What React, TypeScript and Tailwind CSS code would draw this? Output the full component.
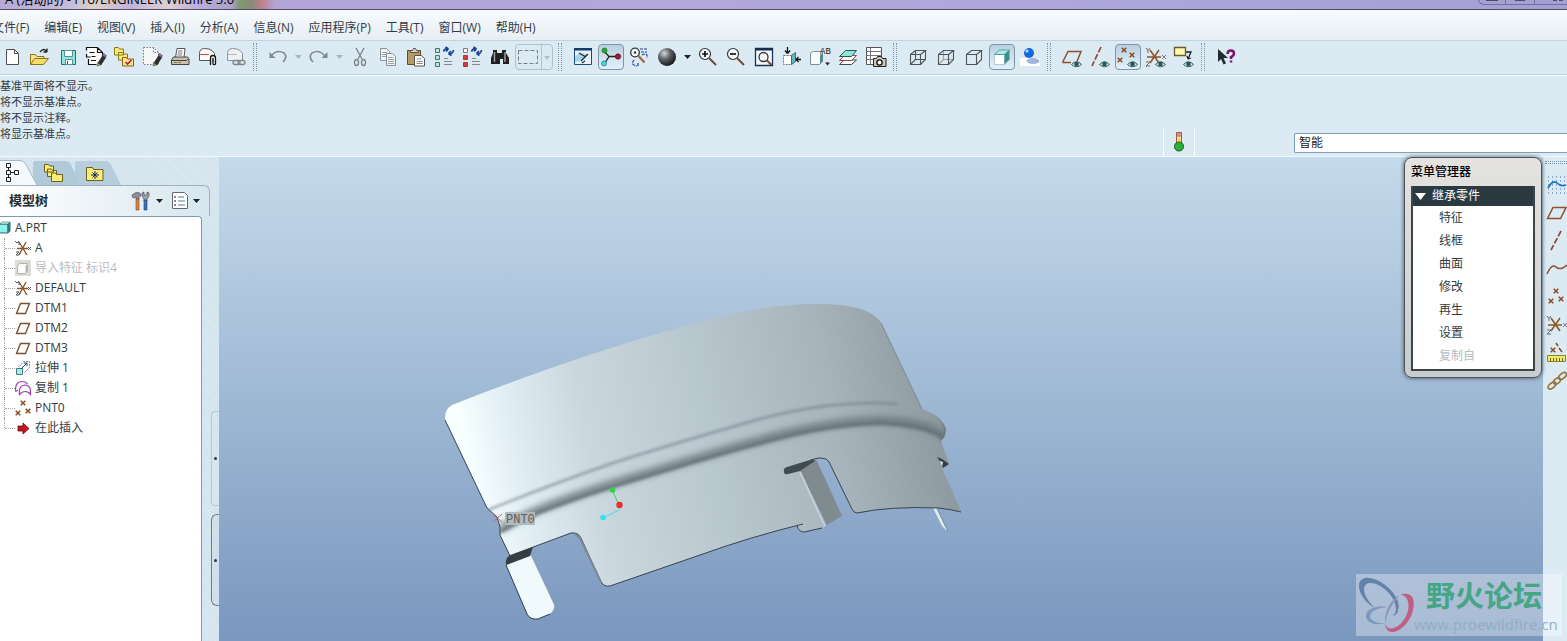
import type { ReactNode } from 'react';
import { clsx } from 'clsx';

interface Tool {
  label: string;
  icon: ReactNode;
  pressed?: boolean;
  menu?: 'on' | 'off';
}

function Icon({ children, size = 22 }: { children: ReactNode; size?: 16 | 22 }) {
  return (
    <svg
      aria-hidden="true"
      className="shrink-0"
      fill="none"
      height={size}
      viewBox={`0 0 ${size} ${size}`}
      width={size}
    >
      {children}
    </svg>
  );
}

const Eye = () => (
  <g>
    <path d="M10.500 18.500q5-5.500 10 0q-5 4.500-10 0Z" fill="#dcebee" stroke="#3c5c5c" />
    <circle cx="15.500" cy="18" fill="#1f5a55" r="2.300" />
  </g>
);

const Pencil = () => (
  <g>
    <path d="m13 17 5-8 3 2-5 8Z" fill="#2e2e2e" stroke="#222" strokeWidth=".6" />
    <path d="m18.500 7.500 3 2-1.200 2-3-2Z" fill="#9b6cc4" stroke="#333" strokeWidth=".5" />
    <path d="m12.500 16.500 3 2.500-3.500 1Z" fill="#9dbb3c" stroke="#333" strokeWidth=".5" />
  </g>
);

const Cross = ({ x, y }: { x: number; y: number }) => (
  <path
    d={`M${x - 2.300} ${y - 2.300}l4.600 4.600M${x + 2.300} ${y - 2.300}l-4.600 4.600`}
    stroke="#8a4a22"
    strokeWidth="1.500"
  />
);

const Swap = () => (
  <path
    d="M10.500 5.500q1-3.500 5-2.500m0 0-3-2m3 2-2.500 2.500M20.500 4q-.5 4.500-5 3.500m0 0 2.500-2.500m-2.500 2.500 3 2"
    stroke="#15418f"
    strokeWidth="1.700"
  />
);

const Cube = ({ hidden }: { hidden?: 'solid' | 'dim' }) => (
  <g stroke="#4c5558" strokeWidth="1.100">
    {hidden && (
      <path
        d="M8.500 4.500v9h10M8.500 13.500l-5 5"
        stroke={hidden === 'dim' ? '#b09a9a' : '#4c5558'}
      />
    )}
    <path d="M3.500 8.500h10v10h-10ZM3.500 8.500l5-4h10l-5 4M18.500 4.500v9l-5 5" />
  </g>
);

const Csys = ({ eye }: { eye?: boolean }) => (
  <g>
    <path d="M5 4l9 13M14 4 5 17M2 11h14" stroke="#8a5528" strokeWidth="1.500" />
    <path d="M1 2l2 2.500L5 2M3 4.500V7M1 16h4l-4 4h4" stroke="#666" />
    <path d="m17 9 4 4m0-4-4 4" stroke="#777c94" />
    {eye && <Eye />}
  </g>
);

const fileTools: Tool[] = [
  {
    label: '新建',
    icon: (
      <Icon>
        <path d="M5.500 3.500h8l4 4v11h-12Z" fill="#fff" stroke="#505050" />
        <path d="M13.500 3.500v4h4" stroke="#505050" />
      </Icon>
    ),
  },
  {
    label: '打开',
    icon: (
      <Icon>
        <path d="M1.500 18.500v-10h5l1.500 2h7v3" fill="#f6e58a" stroke="#8a7420" />
        <path d="m1.500 18.500 4-6h14l-5 6Z" fill="#f3dc6a" stroke="#8a7420" />
        <path d="M11 6q4-5 7 0m0 0V2.500M18 6h-3.500" stroke="#222" strokeWidth="1.300" />
      </Icon>
    ),
  },
  {
    label: '保存',
    icon: (
      <Icon>
        <path d="M4.500 4.500h14v14h-14Z" fill="#8fe6e0" stroke="#2b6a78" />
        <path d="M7.500 4.500h8v6h-8Z" fill="#fff" stroke="#52939c" />
        <path d="M8.500 13.500h7v5h-7Z" fill="#fff" stroke="#52939c" />
        <path d="M10.500 15v3" stroke="#2b6a78" />
      </Icon>
    ),
  },
  {
    label: '编辑文件',
    icon: (
      <Icon>
        <path d="M2 2h11l5 5v11H4Z" fill="#fff" />
        <path d="M1.500 4.500v-3h11l5 5v3M12.500 1.500v5h5M4.500 6.500h5M1.500 8v3h4M6.500 10.500h4M3.500 13v5.500h8M6 14.500h5" stroke="#111" strokeWidth="1.200" />
        <Pencil />
      </Icon>
    ),
  },
  {
    label: '工作目录',
    icon: (
      <Icon>
        <path d="M1.500 1.500h4l1 1.500h4v6h-9ZM5.500 6.500h4l1 1.500h4v6h-9Z" fill="#f8ea76" stroke="#8c7a1a" />
        <path d="M9.500 11.500h4l1 1.500h6v7h-11Z" fill="#fbe98c" stroke="#8c5a1a" />
        <path d="m12.500 16 2 2 4-4" stroke="#b2202a" strokeWidth="1.600" />
      </Icon>
    ),
  },
  {
    label: '拭除',
    icon: (
      <Icon>
        <path d="M2.500 1.500h10l5 5v12h-15Z" fill="#f4f6f7" stroke="#777" strokeDasharray="1.500 1.500" />
        <path d="M12.500 1.500v5h5" stroke="#777" strokeDasharray="1.500 1.500" />
        <Pencil />
      </Icon>
    ),
  },
  {
    label: '打印',
    icon: (
      <Icon>
        <path d="M6.500 11.500 8 2.500h8l-1 9Z" fill="#fff" stroke="#555" />
        <path d="M9 5h4.500M8.700 7h4.500M8.500 9H13" stroke="#777" />
        <path d="m2.500 14 2-3h14l1.500 2v5.500H2.500Z" fill="#c9c2b4" stroke="#444" />
        <path d="M2.500 14.500h15m0 0 2-1.500" stroke="#444" />
        <path d="M5 16.500h3" stroke="#3da03d" />
        <path d="M9 16.500h3" stroke="#d45a28" />
      </Icon>
    ),
  },
  {
    label: '发送邮件附件',
    icon: (
      <Icon>
        <path d="M2.500 7.500q0-5 5-5t7.500 2l2.500 3v7h-15Z" fill="#fbfbfb" stroke="#555" />
        <path d="M3 8.500h9" stroke="#c05050" />
        <path d="M13.500 19v-7a2.500 2.500 0 0 1 5 0v6a1.500 1.500 0 0 1-2.500 0V12" fill="#eee" stroke="#111" strokeWidth="1.300" />
      </Icon>
    ),
  },
  {
    label: '发送邮件链接',
    icon: (
      <Icon>
        <path d="M2.500 7.500q0-5 5-5t7.500 2l2.500 3v7h-15Z" fill="#eef1f3" stroke="#8d9296" />
        <path d="M3 8.500h9" stroke="#b3b8bb" />
        <rect height="4" rx="2" stroke="#7f868b" strokeWidth="1.300" width="7" x="8" y="14.500" />
        <rect height="4" rx="2" stroke="#7f868b" strokeWidth="1.300" width="7" x="13" y="14.500" />
      </Icon>
    ),
  },
];

const editTools: Tool[] = [
  {
    label: '撤消',
    menu: 'off',
    icon: (
      <Icon>
        <path d="M4 10q6-7 13-3 4 4-1 9" stroke="#7f8b92" strokeWidth="1.600" />
        <path d="M2.500 6v6h6Z" fill="#7f8b92" />
      </Icon>
    ),
  },
  {
    label: '重做',
    menu: 'off',
    icon: (
      <Icon>
        <path d="M17 10Q11 3 4 7q-4 4 1 9" stroke="#7f8b92" strokeWidth="1.600" />
        <path d="M19.500 6v6h-6Z" fill="#7f8b92" />
      </Icon>
    ),
  },
  {
    label: '剪切',
    icon: (
      <Icon>
        <path d="m7 2 6 11M15 2 9 13" stroke="#7a8287" strokeWidth="1.300" />
        <ellipse cx="7.500" cy="16.500" rx="2" ry="3" stroke="#7a8287" strokeWidth="1.300" />
        <ellipse cx="14.500" cy="16.500" rx="2" ry="3" stroke="#7a8287" strokeWidth="1.300" />
      </Icon>
    ),
  },
  {
    label: '复制',
    icon: (
      <Icon>
        <path d="M3.500 2.500h6l3 3v9h-9Z" fill="#f1f4f6" stroke="#8b9297" />
        <path d="M5 6.500h5M5 8.500h5M5 10.500h5" stroke="#9aa1a6" />
        <path d="M9.500 7.500h6l3 3v9h-9Z" fill="#f1f4f6" stroke="#8b9297" />
        <path d="M11 11.500h5M11 13.500h6M11 15.500h6M11 17.500h6" stroke="#9aa1a6" />
      </Icon>
    ),
  },
  {
    label: '粘贴',
    icon: (
      <Icon>
        <path d="M2.500 4.500h13v14h-13Z" fill="#b89b62" stroke="#5f4c26" />
        <path d="M5.500 6.500v-2h2l1-2h2l1 2h2v2Z" fill="#d8d2c0" stroke="#555" />
        <path d="M9.500 9.500h7l3 3v7.500h-10Z" fill="#fff" stroke="#555" />
        <path d="M11.500 13h5M11.500 15.500h6M11.500 17.500h6" stroke="#888" />
      </Icon>
    ),
  },
  {
    label: '再生',
    icon: (
      <Icon>
        <path d="M2.500 2.500h4v4h-4ZM2.500 9.500h4v4h-4ZM2.500 16.500h4v4h-4Z" fill="#b9e6d8" stroke="#46756c" />
        <path d="M11 15.500h8M11 18.500h8M11 12.500h4" stroke="#888" />
        <Swap />
      </Icon>
    ),
  },
  {
    label: '再生管理器',
    icon: (
      <Icon>
        <path d="M2.500 2.500h4v4h-4Z" fill="#fff" stroke="#8a7272" />
        <path d="M2.500 9.500h4v4h-4ZM2.500 16.500h4v4h-4Z" fill="#e0383c" stroke="#9c3c3c" />
        <path d="M11 15.500h8M11 18.500h8M11 12.500h4" stroke="#888" />
        <Swap />
      </Icon>
    ),
  },
  {
    label: '查找',
    icon: (
      <Icon>
        <path d="M4 4h4v3h5V4h4v3l3 5v6h-6v-5h-3v5H2v-6l2-5Z" fill="#202020" />
        <path d="M5.500 6v10M16 6v10" stroke="#9a9a9a" strokeWidth="1.500" />
      </Icon>
    ),
  },
];

const viewTools: Tool[] = [
  {
    label: '重画',
    icon: (
      <Icon>
        <path d="M2.500 2.500h17v16h-17Z" fill="#e6f3fb" stroke="#1f4a7a" />
        <path d="M2 2h18v2.500H2Z" fill="#173a6c" />
        <path d="M3 16q8 0 12-8l-8-1-4 4Z" fill="#a9d4ee" />
        <path d="m9 15 7-7M7 7l7 4M10 17l3-2" stroke="#1c2c3a" strokeWidth="1.300" />
      </Icon>
    ),
  },
  {
    label: '旋转中心',
    pressed: true,
    icon: (
      <Icon>
        <path d="M4.500 5.500 9 10.500l-4.500 7M9 10.500h9" stroke="#222" strokeWidth="1.300" />
        <circle cx="4.500" cy="4.500" fill="#25b02c" r="2.500" stroke="#125a17" strokeWidth=".6" />
        <circle cx="4" cy="17.500" fill="#42d7ea" r="2.500" stroke="#17626e" strokeWidth=".6" />
        <circle cx="18" cy="10.500" fill="#a3162e" r="2.700" stroke="#4d0a14" strokeWidth=".6" />
      </Icon>
    ),
  },
  {
    label: '定向模式',
    icon: (
      <Icon>
        <circle cx="7" cy="6.500" fill="#f4fafc" r="4.300" stroke="#333" strokeWidth="1.300" />
        <circle cx="7" cy="6.500" fill="#333" r="1.200" />
        <path d="m10.500 10 6 6.500" stroke="#96714a" strokeWidth="2.500" />
        <path d="M12 3h7M13 6h6M14 9q6-3 5 3M6 14q-4 5 3 6M10 20v-4" stroke="#1d3f9a" strokeDasharray="3 1" strokeWidth="1.200" />
      </Icon>
    ),
  },
  {
    label: '外观库',
    menu: 'on',
    icon: (
      <Icon>
        <defs>
          <radialGradient cx=".35" cy=".3" id="ball" r=".75">
            <stop offset="0" stopColor="#d5d8da" />
            <stop offset=".45" stopColor="#5c6266" />
            <stop offset="1" stopColor="#101214" />
          </radialGradient>
        </defs>
        <circle cx="11" cy="11" fill="url(#ball)" r="9" />
      </Icon>
    ),
  },
  {
    label: '放大',
    icon: (
      <Icon>
        <circle cx="8" cy="8" fill="#f6fbfd" r="5.500" stroke="#333" strokeWidth="1.200" />
        <path d="M5 8h6M8 5v6" stroke="#111" strokeWidth="1.700" />
        <path d="m12 12 7 7" stroke="#6a4a34" strokeWidth="2" />
      </Icon>
    ),
  },
  {
    label: '缩小',
    icon: (
      <Icon>
        <circle cx="8" cy="8" fill="#f6fbfd" r="5.500" stroke="#333" strokeWidth="1.200" />
        <path d="M5 8h6" stroke="#111" strokeWidth="1.700" />
        <path d="m12 12 7 7" stroke="#6a4a34" strokeWidth="2" />
      </Icon>
    ),
  },
  {
    label: '重新调整',
    icon: (
      <Icon>
        <path d="M2.500 2.500h17v17h-17Z" fill="#f4f9fc" stroke="#1e3358" strokeWidth="1.300" />
        <path d="M2 2h18v2.500H2Z" fill="#172a50" />
        <circle cx="10.500" cy="11" r="4.500" stroke="#333" strokeWidth="1.300" />
        <path d="m13.500 14 5 5" stroke="#6a4a34" strokeWidth="2" />
      </Icon>
    ),
  },
  {
    label: '重定向',
    icon: (
      <Icon>
        <path d="M2.500 9.500h8v9h-8Z" fill="#fff" stroke="#777" strokeDasharray="2 1" />
        <path d="m10.500 9.500 4-3v9l-4 3Z" fill="#5fb9b2" stroke="#31706c" />
        <path d="M6.500 1v5m0 1.500L4 4.500m2.500 3L9 4.500M20 13.500h-5m0 0 2.500-2.500M15 13.500l2.500 2.500" stroke="#111" strokeWidth="1.300" />
      </Icon>
    ),
  },
  {
    label: '已保存视图',
    icon: (
      <Icon>
        <path d="M1.500 8q0-2 3-2.500h9v10l-3 3h-9Z" fill="#f7fbfc" stroke="#7d8f92" />
        <path d="M11 9v9l3-3V7Z" fill="#4f8d86" />
        <text className="font-['Liberation_Mono',monospace] text-[9px]" fill="#222" x="11" y="8">
          AB
        </text>
        <path d="M16 16.500h5l-2.500 3Z" fill="#222" />
      </Icon>
    ),
  },
  {
    label: '层',
    icon: (
      <Icon>
        <path d="m2.500 18.500 5-4.500h12l-5 4.500Z" fill="#fff" stroke="#3b4c50" />
        <path d="m2.500 14.500 5-5h12l-5 5Z" fill="#fff" stroke="#a04040" />
        <path d="m2.500 10.500 6-6h11l-5 6Z" fill="#8ce6dc" stroke="#24595c" />
      </Icon>
    ),
  },
  {
    label: '视图管理器',
    icon: (
      <Icon>
        <path d="M1.500 1.500h15v17h-15Z" fill="#fff" stroke="#555" />
        <path d="M1.500 5.500h15M1.500 9.500h15M1.500 13.500h15M5.500 1.500v17" stroke="#777" />
        <path d="M8.500 12.500h3l1-2h4l1 2h3.500v8H8.500Z" fill="#c8c4b6" stroke="#222" />
        <circle cx="14.500" cy="16.500" fill="#fff" r="2.600" stroke="#111" strokeWidth="1.300" />
      </Icon>
    ),
  },
];

const displayTools: Tool[] = [
  { label: '线框', icon: <Icon><Cube hidden="solid" /></Icon> },
  { label: '隐藏线', icon: <Icon><Cube hidden="dim" /></Icon> },
  { label: '消隐', icon: <Icon><Cube /></Icon> },
  {
    label: '着色',
    pressed: true,
    icon: (
      <Icon>
        <path d="M3.500 8.500h10v10h-10Z" fill="#fff" stroke="#9ab" strokeWidth=".6" />
        <path d="m3.500 8.500 5-4.500h10l-5 4.500Z" fill="#a5eee8" stroke="#4b8a8c" strokeWidth=".8" />
        <path d="m13.500 8.500 5-4.500v9.500l-5 5Z" fill="#3c8f90" />
      </Icon>
    ),
  },
  {
    label: '增强的真实感',
    icon: (
      <Icon>
        <path d="M1 12h20v8H1Z" fill="#fff" />
        <ellipse cx="14" cy="15" fill="#9db7dd" rx="6.500" ry="3" />
        <circle cx="10" cy="7" fill="#1169e0" r="5" />
        <circle cx="8" cy="5" fill="#9cd3ff" r="1.700" />
      </Icon>
    ),
  },
];

const datumTools: Tool[] = [
  {
    label: '基准平面显示',
    icon: (
      <Icon>
        <path d="M1.500 16.500 7 5.500h13l-4 10M1.500 16.500H10" stroke="#8a5230" strokeWidth="1.500" />
        <Eye />
      </Icon>
    ),
  },
  {
    label: '基准轴显示',
    icon: (
      <Icon>
        <path d="M12 1 3 20" stroke="#8a4a30" strokeDasharray="6 2" strokeWidth="1.700" />
        <Eye />
      </Icon>
    ),
  },
  {
    label: '基准点显示',
    pressed: true,
    icon: (
      <Icon>
        <Cross x={7} y={4} />
        <Cross x={15} y={9} />
        <Cross x={3} y={14} />
        <Eye />
      </Icon>
    ),
  },
  { label: '坐标系显示', icon: <Icon><Csys eye /></Icon> },
  {
    label: '注释元素显示',
    icon: (
      <Icon>
        <path d="M1.500 1.500h11v8h-11Z" fill="#fdfbb0" stroke="#6c5a28" strokeWidth="1.300" />
        <path d="M13 6h5l-3 7m0 0-1-3m1 3 3-1" stroke="#222" strokeWidth="1.300" />
        <Eye />
      </Icon>
    ),
  },
];

const helpTools: Tool[] = [
  {
    label: '上下文帮助',
    icon: (
      <Icon>
        <path d="M3 3v13l3-3 2.500 5.500 2.500-1L8.500 12H13Z" fill="#1e2c33" />
        <path d="M12.500 8q0-3.500 3.300-3.500 3.200 0 3.200 3 0 2-3 3.500v2m0 1.500v2" stroke="#78126e" strokeWidth="2.500" />
      </Icon>
    ),
  },
];

const sideTools: Tool[] = [
  {
    label: '草绘',
    icon: (
      <Icon>
        <path d="M2 3h18M2 7h18M2 11h18M2 15h18M2 19h18" stroke="#44659a" strokeDasharray="1 3" />
        <path d="M2 14q5-9 9-5t9 2" stroke="#1573c8" strokeWidth="1.700" />
      </Icon>
    ),
  },
  { label: '平面', icon: <Icon><path d="M1.500 16.500 7 5.500h13l-5.500 11Z" stroke="#8a5230" strokeWidth="1.500" /></Icon> },
  { label: '轴', icon: <Icon><path d="M15 1 5 20" stroke="#8a4a30" strokeDasharray="6 2" strokeWidth="1.700" /></Icon> },
  { label: '曲线', icon: <Icon><path d="M1 16q5-11 9-7t11-2" stroke="#8a4a30" strokeWidth="1.500" /></Icon> },
  {
    label: '点',
    icon: (
      <Icon>
        <Cross x={10} y={5} />
        <Cross x={15} y={13} />
        <Cross x={5} y={15} />
      </Icon>
    ),
  },
  { label: '坐标系', icon: <Icon><Csys /></Icon> },
  {
    label: '分析',
    icon: (
      <Icon>
        <Cross x={7} y={8} />
        <path d="m10 1 2 3m1 2 3 4" stroke="#8a4a22" strokeWidth="1.500" />
        <path d="M1.500 13.500h18v6h-18Z" fill="#f1ea6a" stroke="#8d8420" />
        <path d="M4.500 19v-3m3 3v-3m3 3v-3m3 3v-3m3 3v-3" stroke="#6c651a" />
      </Icon>
    ),
  },
  {
    label: '参照',
    icon: (
      <Icon>
        <g stroke="#96753c" strokeWidth="1.600">
          <ellipse cx="6" cy="15.500" rx="4.500" ry="2.500" transform="rotate(-40 6 15.500)" />
          <ellipse cx="11" cy="11" rx="4" ry="2.500" transform="rotate(-40 11 11)" />
          <ellipse cx="16.500" cy="6" rx="4.500" ry="2.500" transform="rotate(-40 16.500 6)" />
        </g>
      </Icon>
    ),
  },
];

const menus = [
  '文件(F)',
  '编辑(E)',
  '视图(V)',
  '插入(I)',
  '分析(A)',
  '信息(N)',
  '应用程序(P)',
  '工具(T)',
  '窗口(W)',
  '帮助(H)',
];

const messages = [
  '基准平面将不显示。',
  '将不显示基准点。',
  '将不显示注释。',
  '将显示基准点。',
];

const planeIcon = (
  <Icon size={16}>
    <path d="m1.500 13.500 4-10h9l-4 10Z" stroke="#7a5230" strokeWidth="1.400" />
  </Icon>
);

const csysIcon = (
  <Icon size={16}>
    <path d="m4 2 8 13M11 2 4 15M2 8.500h11" stroke="#8a5528" strokeWidth="1.400" />
    <path d="m0 1 2 2 2-2M4 5V2M1 12h3l-3 3h3M13 7l3 3m0-3-3 3" stroke="#555" />
  </Icon>
);

const tree: { name: string; icon: ReactNode; dim?: boolean }[] = [
  { name: 'A', icon: csysIcon },
  {
    name: '导入特征 标识4',
    dim: true,
    icon: (
      <Icon size={16}>
        <path d="M0 0h16v16H0Z" fill="#dcdcd8" />
        <path d="m2.500 6 2-2.500h8v8l-2 2h-8Z" fill="#fff" stroke="#b3b3ae" />
        <path d="m10.500 6 2-2.500v8l-2 2Z" fill="#b9b9b4" />
      </Icon>
    ),
  },
  { name: 'DEFAULT', icon: csysIcon },
  { name: 'DTM1', icon: planeIcon },
  { name: 'DTM2', icon: planeIcon },
  { name: 'DTM3', icon: planeIcon },
  {
    name: '拉伸 1',
    icon: (
      <Icon size={16}>
        <path d="M1.500 8.500h6v6h-6Z" fill="#a8ece6" stroke="#3c7a7a" />
        <path d="M4 6.500 9 1.500h5.500v6l-5 5" stroke="#5d8ba0" strokeDasharray="2 1" />
        <path d="m6 9 6-6m0 0H9m3 0v3" stroke="#1f4a6a" />
      </Icon>
    ),
  },
  {
    name: '复制 1',
    icon: (
      <Icon size={16}>
        <path d="M.5 11.500Q0 1.500 7 1.500q4 0 5.500 2.500M.5 11.500 3 10" stroke="#a03cb4" strokeWidth="1.200" />
        <path d="M4.500 14.500q-1-9 5-9.500 5 0 6 5v4.500q-2-3-5.500-3-3 0-5.500 3Z" stroke="#a03cb4" strokeWidth="1.200" />
      </Icon>
    ),
  },
  {
    name: 'PNT0',
    icon: (
      <Icon size={16}>
        <Cross x={8} y={3} />
        <Cross x={13} y={11} />
        <Cross x={3} y={13} />
      </Icon>
    ),
  },
  {
    name: '在此插入',
    icon: (
      <Icon size={16}>
        <path d="M3 6h5V3l6 5.500L8 14v-3H3Z" fill="#c81420" stroke="#5a0a10" strokeWidth=".8" />
      </Icon>
    ),
  },
];

const menuItems = ['特征', '线框', '曲面', '修改', '再生', '设置'];

function ToolButton({ tool }: { tool: Tool }) {
  return (
    <>
      <button
        aria-label={tool.label}
        aria-pressed={tool.pressed}
        className="flex h-7 w-7 shrink-0 items-center justify-center"
        type="button"
      >
        <span
          className={clsx(
            'flex h-[26px] w-[26px] items-center justify-center rounded-sm',
            tool.pressed &&
              'border border-[#7d95a8] bg-linear-to-b from-[#b9d0e0] to-[#e3f1fa]'
          )}
        >
          {tool.icon}
        </span>
      </button>
      {tool.menu && (
        <button
          aria-label={`${tool.label}选项`}
          className="flex h-7 w-[13px] shrink-0 items-center justify-center"
          type="button"
        >
          <Caret dim={tool.menu === 'off'} />
        </button>
      )}
    </>
  );
}

function Caret({ dim }: { dim?: boolean }) {
  return (
    <svg aria-hidden="true" height="4" viewBox="0 0 7 4" width="7">
      <path d="M0 0h7L3.500 4Z" fill={dim ? '#a9b6be' : '#1c2328'} />
    </svg>
  );
}

function Grip() {
  return (
    <div className="flex w-3.5 shrink-0 pl-[3px]">
      <div className="h-7 w-px border-[#7b95ab] border-l border-dotted" />
      <div className="ml-0.5 h-7 w-px border-[#7b95ab] border-l border-dotted" />
    </div>
  );
}

function Toolbar() {
  return (
    <div className="flex h-[35px] items-start overflow-hidden border-[#c0d6e4] border-y bg-[#dceaf3] pt-0.5">
      <div className="-ml-0.5 flex items-center">
        {fileTools.map((t) => <ToolButton key={t.label} tool={t} />)}
        <Grip />
        {editTools.map((t) => <ToolButton key={t.label} tool={t} />)}
        <button
          aria-label="选取框"
          className="mr-0.5 ml-px flex h-[26px] w-[38px] shrink-0 items-center rounded-sm border border-[#b3c1ca]"
          type="button"
        >
          <svg aria-hidden="true" fill="none" height="24" viewBox="0 0 36 24" width="36">
            <path d="M2.500 5.500h19v13h-19Z" stroke="#737f86" strokeDasharray="4 2" />
            <path d="M25.500 0v24" stroke="#b3c1ca" />
            <path d="M28 11h6l-3 4Z" fill="#b3bec5" />
          </svg>
        </button>
        <Grip />
        {viewTools.map((t) => <ToolButton key={t.label} tool={t} />)}
        <Grip />
        {displayTools.map((t) => <ToolButton key={t.label} tool={t} />)}
        <Grip />
        {datumTools.map((t) => <ToolButton key={t.label} tool={t} />)}
        <Grip />
        {helpTools.map((t) => <ToolButton key={t.label} tool={t} />)}
      </div>
    </div>
  );
}

function TitleBar() {
  return (
    <header className="flex h-2.5 items-end justify-between overflow-hidden border-[#544a6e] border-b bg-[linear-gradient(90deg,#b7a9d2_0,#c6bcdc_70px,#e0d2c4_95px,#c0b4da_130px,#ddcfd0_168px,#b9aedb_200px,#a99fc8_232px,#7d9a6c_240px,#8d8a78_252px,#c0808c_262px,#b3a6d6_275px,#b0a8da_60%,#a5a0d2_100%)]">
      <h1 className="whitespace-nowrap pb-0.5 pl-[5px] text-[13px] text-black leading-4">
        A (活动的) - Pro/ENGINEER Wildfire 5.0
      </h1>
      <div className="flex h-2.5 items-start">
        <button aria-label="最小化" className="flex h-1.5 w-7 justify-center rounded-bl-md border border-[#77709c] border-t-0" type="button">
          <span className="h-0.5 w-3 bg-[#4e4a68]" />
        </button>
        <button aria-label="最大化" className="flex h-1.5 w-7 justify-center border-[#77709c] border-b" type="button">
          <span className="h-0.5 w-2.5 border border-[#4e4a68] border-t-0 bg-white" />
        </button>
        <button aria-label="关闭" className="flex h-1.5 w-[33px] items-start justify-end gap-0.5 border-[#77709c] border-b border-l pr-1" type="button">
          <span className="h-0.5 w-1 bg-[#4e4a68]" />
          <span className="h-0.5 w-1 bg-[#4e4a68]" />
        </button>
      </div>
    </header>
  );
}

function Messages() {
  return (
    <section className="flex h-[82px] justify-between border-[#f3f8fb] border-y bg-[#dceaf3]">
      <div className="pt-0.5 text-[#303a42] text-[11px] leading-4">
        {messages.map((m) => (
          <p key={m}>{m}</p>
        ))}
      </div>
      <div className="flex w-[404px] items-end">
        <div className="flex h-7 w-8 items-center justify-center border-white border-x">
          <svg aria-label="再生状态" fill="none" height="20" role="img" viewBox="0 0 12 20" width="12">
            <path d="M3.500.5h5v11h-5Z" fill="#f4e9b0" stroke="#a0583c" />
            <circle cx="6" cy="3" fill="#d88a8a" r="2.200" />
            <circle cx="6" cy="8" fill="#f3d955" r="2" />
            <circle cx="6" cy="14.500" fill="#2bb13a" r="4.500" stroke="#145c1c" />
          </svg>
        </div>
        <select
          aria-label="选取过滤器"
          className="mb-[3px] ml-[99px] h-5 flex-1 appearance-none rounded-l-xs border border-[#7fa0b8] border-r-0 bg-white pl-1 text-[#222] text-xs leading-4"
        >
          <option>智能</option>
        </select>
      </div>
    </section>
  );
}

function ModelTree() {
  return (
    <aside className="flex w-[219px] shrink-0 bg-[repeating-linear-gradient(45deg,#d3e4ee_0,#d3e4ee_2px,#dbe9f1_2px,#dbe9f1_3px)]">
      <div className="flex w-[210px] flex-col">
        <div className="relative h-7 shrink-0">
          <svg aria-hidden="true" className="absolute inset-0" fill="none" height="28" viewBox="0 0 210 28" width="210">
            <path d="M75 28V6q0-2 3-2h27q4 0 6 4l10 20Z" fill="#b5cddd" />
            <path d="M33 28V6q0-2 3-2h29q4 0 6 4l10 20Z" fill="#b0c9db" />
            <path d="M0 28V3.500h20q4 0 6 4L37 28Z" fill="#f5f9fc" />
            <path d="M0 3.500h20q4 0 6 4L37 28" stroke="#a3b8c5" />
          </svg>
          <div className="relative flex h-full items-center pt-1">
            <button aria-label="模型树" className="flex w-8 justify-start pl-1" type="button">
              <Icon>
                <path d="M2.500 1.500h4v4h-4ZM2.500 8.500h4v4h-4ZM2.500 15.500h4v4h-4ZM10.500 8.500h4v4h-4ZM4.500 5.500v3m0 4v3m2-5h4" stroke="#222" />
              </Icon>
            </button>
            <button aria-label="文件夹浏览器" className="flex w-[42px] justify-center" type="button">
              <Icon>
                <path d="M2.500 2.500h4l1 1.500h4v6h-9ZM5.500 7h4l1 1.500h4v6h-9Z" fill="#f8ec7a" stroke="#6f611a" />
                <path d="M9.500 11h4l1 1.500h6v7h-11Z" fill="#f8ec7a" stroke="#6f611a" />
              </Icon>
            </button>
            <button aria-label="收藏夹" className="flex w-[42px] justify-center" type="button">
              <Icon>
                <path d="M2.500 18.500v-13h6l1 2h9.500v11Z" fill="#f8ec7a" stroke="#6f611a" />
                <path d="M11 9v8m-4-4h8m-6.500-2.500 5 5m0-5-5 5" stroke="#1c2a5c" />
              </Icon>
            </button>
          </div>
        </div>
        <div className="flex h-[31px] shrink-0 items-center rounded-tr-md border-[#9fb3bf] border-t border-r bg-linear-to-r from-white to-[#d6e6ef] pr-[9px] pl-[9px]">
          <h2 className="flex-1 font-bold text-[#222c33] text-[13px]">模型树</h2>
          <button aria-label="设置" className="flex items-center gap-1" type="button">
            <Icon>
              <path d="M2 5q4-4 8-2l1 3H9v3H6V7L3 8Z" fill="#8b939a" stroke="#555" strokeWidth=".7" />
              <path d="M6 9h3v11H6Z" fill="#d98444" stroke="#7a4018" strokeWidth=".6" />
              <path d="M12 3v3l2 3v2h3V9l2-3V3l-2-1v3h-3V2Z" fill="#9aa6b0" stroke="#445" strokeWidth=".7" />
              <path d="M14 10h3v10h-3Z" fill="#3a70bb" stroke="#1d3f73" strokeWidth=".6" />
            </Icon>
            <Caret />
          </button>
          <button aria-label="显示" className="ml-1.5 flex items-center gap-0.5" type="button">
            <Icon>
              <path d="M3.500 2.500h12l3 3v13h-15Z" fill="#fff" stroke="#667" />
              <path d="M9 7h6M9 11h7M9 15h7" stroke="#557a9c" />
              <path d="M5.500 6.500h1v1h-1Zm0 4h1v1h-1Zm0 4h1v1h-1Z" stroke="#445" strokeWidth=".8" />
            </Icon>
            <Caret />
          </button>
        </div>
        <div className="mr-2 flex-1 rounded-tr border-[#7f9ca6] border-t border-r bg-white pt-px text-[#333c42] text-xs">
          <div className="flex h-5 items-center gap-1">
            <svg aria-hidden="true" height="14" viewBox="0 0 11 14" width="11">
              <path d="M-1 3h9v9h-9Z" fill="#8ff0ee" stroke="#2f6c70" />
              <path d="m8 3 2-2v9l-2 2Z" fill="#2f8a8c" stroke="#2f6c70" />
              <path d="m0 3 2-2h8L8 3Z" fill="#c5fbf8" stroke="#2f6c70" strokeWidth=".6" />
            </svg>
            A.PRT
          </div>
          <ul className="ml-1">
            {tree.map((node, i) => (
              <li className="flex h-5 items-center" key={node.name}>
                <span
                  className={clsx(
                    'w-px border-[#9aa4aa] border-l border-dotted',
                    i === tree.length - 1 ? 'h-2.5 self-start' : 'h-5'
                  )}
                />
                <span className="w-2.5 border-[#9aa4aa] border-t border-dotted" />
                {node.icon}
                <span className={clsx('ml-1', node.dim && 'text-[#b9bdbf]')}>
                  {node.name}
                </span>
              </li>
            ))}
          </ul>
        </div>
      </div>
      <div className="flex w-[9px] flex-col gap-2 pt-[254px] pl-px">
        <button aria-label="展开浏览器" className="flex h-[95px] items-center justify-center rounded-l border border-[#b4cbd7] border-r-0" type="button">
          <span className="h-[3px] w-[3px] rounded-full bg-[#2b3c48]" />
        </button>
        <button aria-label="折叠导航器" className="flex h-[92px] items-center justify-center rounded-l-md border border-[#6c7f8c] border-r-0 bg-[#cfe0eb]" type="button">
          <span className="h-[3px] w-[3px] rounded-full bg-[#2b3c48]" />
        </button>
      </div>
    </aside>
  );
}

const BODY =
  'M445 417Q445 409 452 405Q520 378 583 357Q650 335 700 322Q770 303 820 304Q866 304 880 321L922 409Q942 416 946 429Q946 436 941 441L949 464L942 468L961 511Q950 509 938 508Q890 506 857 513Q854 513 852 509L829 462Q827 458 821 458Q815 458 811 460L800 468L825 527L804 532Q799 532 797 526L803 524Q750 537 700 555L610 586Q604 587 601 582L581 538Q578 532 571 533L510 556L500 535V527L497 517L487 508L445 420Z';

const CREASE = 'M488 510Q555 483 613 463Q675 443 767 417Q840 399 897 404';
const GROOVE = 'M500 532Q525 517 550 508Q590 493 627 482L700 460Q740 448 783 437Q835 424 880 423Q930 425 946 440';

function Viewport() {
  return (
    <svg
      aria-label="A.PRT"
      className="absolute inset-0 h-full w-full"
      fill="none"
      preserveAspectRatio="xMinYMin slice"
      role="img"
      viewBox="219 157 1324 484"
    >
      <defs>
        <linearGradient gradientUnits="userSpaceOnUse" id="sheet" x1="470" x2="950" y1="470" y2="380">
          <stop offset="0" stopColor="#f7ffff" />
          <stop offset=".1" stopColor="#e0edf3" />
          <stop offset=".25" stopColor="#cad7de" />
          <stop offset=".5" stopColor="#b8c6ce" />
          <stop offset=".75" stopColor="#a8b4bb" />
          <stop offset="1" stopColor="#89969c" />
        </linearGradient>
        <filter height="1.4" id="soft" width="1.2" x="-.1" y="-.2">
          <feGaussianBlur stdDeviation="3" />
        </filter>
        <filter height="1.4" id="fine" width="1.2" x="-.1" y="-.2">
          <feGaussianBlur stdDeviation="1.400" />
        </filter>
        <clipPath id="body">
          <path d={BODY} />
        </clipPath>
      </defs>

      <path d="m933 508 3-1 12 25-6-6Z" fill="#dfeaf2" />
      <path d="m937 508 11 24" stroke="#7d8f9e" />
      <path d={BODY} fill="url(#sheet)" />

      <g clipPath="url(#body)">
        <g transform="translate(0 -3)">
          <path d={GROOVE} filter="url(#soft)" stroke="#6a757b" strokeOpacity=".85" strokeWidth="8" />
        </g>
        <path d={GROOVE} filter="url(#fine)" stroke="#5f6a70" strokeOpacity=".8" strokeWidth="3.500" />
        <path d={CREASE} filter="url(#fine)" stroke="#6e7c84" strokeOpacity=".8" strokeWidth="2" />
        <path d="M935 412Q945 420 946 429Q946 436 941 441" filter="url(#fine)" stroke="#66727a" strokeWidth="3" />
      </g>

      {/* trimmed edges */}
      <path d="M510 556L500 535V527L497 517L487 508L445 420M509 556L571 533Q578 532 581 538L601 582Q604 587 610 586L700 555Q750 537 803 524M797 526Q799 532 804 532L822 528M811 460Q815 458 821 458Q827 458 829 462L852 509Q854 513 857 513Q890 506 938 508Q950 509 961 512" stroke="#36444f" />
      <path d="m881 323 41 86" stroke="#7b8991" />
      <path d="M575 534 580 538 601 582" stroke="#7c8990" strokeWidth="2" />

      {/* left tab */}
      <path d="M506 565 531 555 554 604Q556 609 550 614L538 619Q530 620 527 614Z" fill="#f0fafc" stroke="#8296a2" strokeWidth=".5" />
      <path d="M506 565 527 614Q530 620 538 619L550 614" stroke="#36444f" />
      <path d="m509 556 24-9-3 9-24 9q-1-6 3-9Z" fill="#343e45" />

      {/* right notch */}
      <path d="m800 471 16-12 26 57-15 9Z" fill="#7f8b8f" />
      <path d="M784 472q-1-4 3-5l26-8 2 2-15 10-12 3q-4 1-4-2Z" fill="#414c52" />
      <path d="m800 472 25 54" stroke="#c3ced5" strokeWidth="2" />
      <path d="m937 457 5 2 7 5-6 4-1-4Z" fill="#333d44" />
      <path d="m940 461 3 1-1 4Z" fill="#e9f2f6" />

      {/* spin centre */}
      <path d="m612 490 7 15" stroke="#3fd04f" />
      <path d="m603 518 16-8" stroke="#3fdde8" />
      <circle cx="612.500" cy="490" fill="#35d045" r="2.800" />
      <circle cx="619.500" cy="505" fill="#e8302e" r="3.200" />
      <circle cx="603" cy="517.500" fill="#33e2f0" r="2.800" />

      <path d="m493 514 9 8m0-8-9 8" stroke="#b5666a" />
      <rect fill="#aebac2" height="13" width="30" x="505" y="512" />
      <text className="font-['Liberation_Mono',monospace] text-xs" fill="#6c5b50" x="506" y="523">
        PNT0
      </text>
    </svg>
  );
}

function MenuManager() {
  return (
    <section className="absolute top-0 right-[25px] w-[138px] rounded-lg border border-[#4b5358] bg-linear-to-b from-[#e4e3e1] to-[#c9ccce] px-1.5 pb-1.5 shadow-[0_0_4px_#3b4a58]">
      <h2 className="flex h-7 items-center font-medium text-black text-xs">菜单管理器</h2>
      <div className="border-2 border-[#3a464b] border-t-0 bg-white pb-0.5 text-[#333c42] text-xs">
        <button aria-expanded="true" className="flex h-5 w-full items-center gap-1.5 bg-[#2b3a40] pl-0.5 text-white" type="button">
          <svg aria-hidden="true" height="7" viewBox="0 0 11 7" width="11">
            <path d="M0 0h11L5.500 7Z" fill="#fff" />
          </svg>
          继承零件
        </button>
        {menuItems.map((item) => (
          <button className="flex h-[23px] w-full items-center pl-[26px]" key={item} type="button">
            {item}
          </button>
        ))}
        <button className="flex h-[23px] w-full items-center pl-[26px] text-[#b4bcc0]" disabled type="button">
          复制自
        </button>
      </div>
    </section>
  );
}

function Watermark() {
  return (
    <div className="absolute right-[5px] bottom-[5px] flex h-[62px] w-[206px] bg-white/35">
      <svg aria-hidden="true" className="shrink-0" fill="none" height="62" viewBox="0 0 58 62" width="58">
        <path d="M42 36C47 23 24 2 9 4-3 7 4 26 19 34 8 24 4 11 13 9 24 8 40 22 40 35Z" fill="#6482ac" />
        <path d="M44 21C54 17 60 23 57 36 54 49 43 59 35 58 31 57 29 53 29 50 31 55 36 56 42 52 50 46 54 35 52 28 51 23 48 21 44 21Z" fill="#c05f85" />
        <path d="M31 33C17 31 9 37 10 43 12 50 21 52 29 49 20 50 14 46 14 42 15 36 23 34 31 33Z" fill="#7d98bd" />
        <path d="M44 21C35 25 28 37 29 50 31 39 37 28 44 21Z" fill="#8c96b8" />
        <path d="M40 35Q40 39 37 42 42 40 42 36Z" fill="#6482ac" />
      </svg>
      <div className="flex flex-col whitespace-nowrap">
        <span className="pl-3 font-['Noto_Sans_CJK_SC',sans-serif] font-bold text-[#45a585] text-[29px] leading-10">
          野火论坛
        </span>
        <span className="text-[#8fafc6] text-[15px] leading-5">www.proewildfire.cn</span>
      </div>
    </div>
  );
}

export default function App() {
  return (
    <div className="flex min-h-screen flex-col overflow-hidden bg-[#dceaf3] font-['Open_Sans','Noto_Sans_CJK_SC',sans-serif]">
      <TitleBar />
      <nav className="flex h-[30px] items-center overflow-hidden bg-linear-to-b from-[#f8fbfe] to-[#e6eef4] pt-1.5">
        <div className="-ml-2 flex gap-[15px] whitespace-nowrap text-[#333c44] text-xs">
          {menus.map((m) => (
            <button key={m} type="button">
              {m}
            </button>
          ))}
        </div>
      </nav>
      <Toolbar />
      <Messages />
      <main className="relative flex flex-1">
        <ModelTree />
        <div className="relative flex-1 overflow-hidden bg-linear-to-b from-[#c5daea] to-[#7a97be]">
          <Viewport />
        </div>
        <div className="w-6 shrink-0 overflow-hidden bg-[#dceaf3]">
          <div className="mt-1 mb-[7px] ml-0.5 h-[3px] border-[#7b95ab] border-y border-dotted" />
          {sideTools.map((t) => <ToolButton key={t.label} tool={t} />)}
        </div>
        <MenuManager />
        <Watermark />
      </main>
    </div>
  );
}
